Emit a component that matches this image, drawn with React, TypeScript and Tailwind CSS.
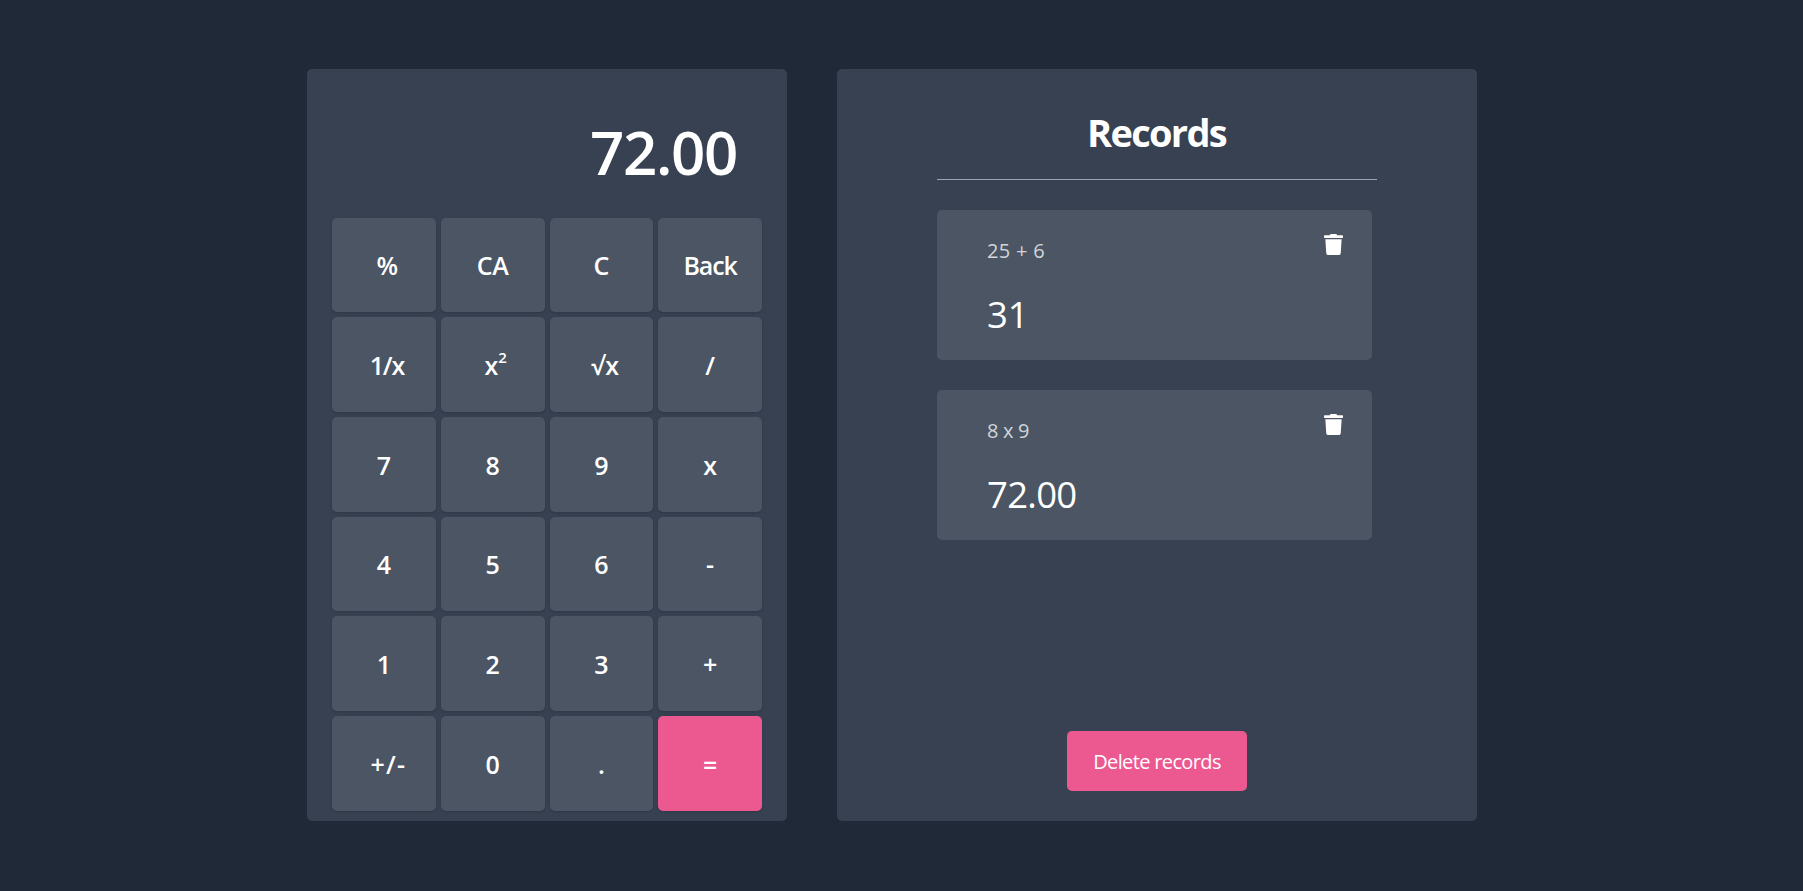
import { FaTrash } from "react-icons/fa";

type Key = { label: string; cls?: string; accent?: boolean; sup?: string };

const keys: Key[] = [
  { label: "%", cls: "pl-[7px]" },
  { label: "CA", cls: "tracking-[-0.01em]" },
  { label: "C" },
  { label: "Back", cls: "tracking-[-0.045em]" },
  { label: "1/x", cls: "pl-[6px] tracking-[-0.05em]" },
  { label: "x", sup: "2", cls: "pl-[6px]" },
  { label: "√x", cls: "pl-[8px] tracking-[0.03em]" },
  { label: "/" },
  { label: "7" },
  { label: "8" },
  { label: "9" },
  { label: "x" },
  { label: "4" },
  { label: "5" },
  { label: "6" },
  { label: "-" },
  { label: "1" },
  { label: "2" },
  { label: "3" },
  { label: "+" },
  { label: "+/-", cls: "pl-[9px] tracking-[0.05em]" },
  { label: "0" },
  { label: "." },
  { label: "=", accent: true },
];

const records = [
  { expression: "25 + 6", result: "31", spacing: "tracking-[0.015em]", resultSpacing: "tracking-normal" },
  { expression: "8 x 9", result: "72.00", spacing: "tracking-[-0.015em]", resultSpacing: "tracking-[-0.02em]" },
];

function KeyButton({ label, cls = "", accent, sup }: Key) {
  return (
    <button
      className={`flex items-center justify-center rounded-[5px] pt-[2.5px] text-[25px] font-semibold text-white shadow-[0_1px_3px_rgba(0,0,0,0.1),0_1px_2px_rgba(0,0,0,0.06)] ${
        accent ? "bg-[#ec5990]" : "bg-[#4b5563]"
      } ${cls}`}
    >
      <span>
        {label}
        {sup && <sup className="-top-[12px] text-[15px] leading-none">{sup}</sup>}
      </span>
    </button>
  );
}

export default function App() {
  return (
    <main className="flex h-[891px] w-full items-start gap-[50px] bg-[#1f2937] pt-[69px] pl-[307px] font-['Open_Sans','Noto_Sans',sans-serif] text-white">
      <section className="flex h-[752px] w-[480px] flex-col rounded-[5px] bg-[#374151] px-[25px] pb-[10.4px]">
        <div className="flex h-[148.6px] shrink-0 items-center justify-end pt-[18px] pr-[25px] text-[60px] leading-none font-semibold tracking-[-0.022em]">
          72.00
        </div>
        <div className="grid flex-1 grid-cols-4 grid-rows-6 gap-[5px]">
          {keys.map((k, i) => (
            <KeyButton key={i} {...k} />
          ))}
        </div>
      </section>

      <section className="flex h-[752px] w-[640px] flex-col items-center rounded-[5px] bg-[#374151] pb-[30px]">
        <h1 className="flex h-[111px] w-[440px] items-center justify-center border-b border-[#9ca3af] pt-[17px] pr-[1px] text-[38px] font-bold tracking-[-0.045em]">
          Records
        </h1>
        <ul className="mt-[30px] flex w-[440px] flex-1 flex-col gap-[30px]">
          {records.map((r) => (
            <li
              key={r.expression}
              className="flex h-[150px] w-[435px] justify-between rounded-[5px] bg-[#4b5563] pt-[24px] pr-[29px] pl-[50px]"
            >
              <div>
                <p className={`text-[20px] leading-[34px] text-[#d1d5db] ${r.spacing}`}>{r.expression}</p>
                <p className={`mt-[21px] text-[36.5px] leading-[50px] ${r.resultSpacing}`}>{r.result}</p>
              </div>
              <FaTrash className="h-[21px] w-[19px]" preserveAspectRatio="none" />
            </li>
          ))}
        </ul>
        <button className="h-[60px] w-[180px] rounded-[5px] bg-[#ec5990] pt-[2px] text-[20px] tracking-[-0.032em]">
          Delete records
        </button>
      </section>
    </main>
  );
}
